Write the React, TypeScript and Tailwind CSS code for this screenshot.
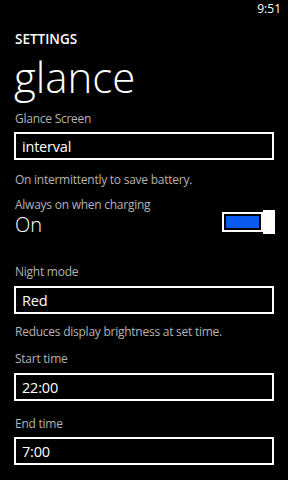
import React from "react";

interface PickerProps {
  value: string;
}

function Picker({ value }: PickerProps) {
  return (
    <div className="box-border h-[28px] border-2 border-white bg-black px-[6px]">
      <span className="block text-[14.5px] leading-[26px] tracking-[-0.2px] text-white">{value}</span>
    </div>
  );
}

function Label({ text, className }: { text: string; className: string }) {
  return (
    <div className={`text-[12px] leading-[18px] tracking-[-0.25px] text-[#b3b3b3] ${className}`}>{text}</div>
  );
}

function Toggle() {
  return (
    <div className="mb-[2px] mr-[-1px] flex items-center">
      <div className="box-border h-[20px] w-[41px] border-2 border-white p-[2px]">
        <div className="h-full w-full bg-[#0a5af0]" />
      </div>
      <div className="h-[24px] w-[12px] bg-white" />
    </div>
  );
}

export default function App() {
  return (
    <div
      className="relative h-[480px] w-[288px] overflow-hidden bg-black text-white"
      style={{ fontFamily: '"Open Sans", "Noto Sans", sans-serif' }}
    >
      <div className="flex h-[17px] justify-end pr-[7px] text-[12px] leading-[17px]">9:51</div>

      <div className="px-[14px]">
        <div className="mt-[15px] pl-[1px] text-[13.5px] font-semibold leading-[14px]">SETTINGS</div>
        <div className="mt-[9px] text-[42px] font-light leading-[44px]">glance</div>

        <Label text="Glance Screen" className="mt-[11px] pl-[1px]" />
        <div className="mt-[4px]">
          <Picker value="interval" />
        </div>
        <Label text="On intermittently to save battery." className="mt-[11px] pl-[1px]" />

        <div className="flex items-end justify-between">
          <div>
            <Label text="Always on when charging" className="mt-[7px] pl-[1px]" />
            <div className="pl-[1px] text-[20px] font-light leading-[22px]">On</div>
          </div>
          <Toggle />
        </div>

        <Label text="Night mode" className="mt-[27px] pl-[1px]" />
        <div className="mt-[5px]">
          <Picker value="Red" />
        </div>
        <Label text="Reduces display brightness at set time." className="mt-[9px] pl-[1px]" />

        <Label text="Start time" className="mt-[9px] pl-[1px]" />
        <div className="mt-[5px]">
          <Picker value="22:00" />
        </div>

        <Label text="End time" className="mt-[14px] pl-[1px]" />
        <div className="mt-[4px]">
          <Picker value="7:00" />
        </div>
      </div>
    </div>
  );
}
